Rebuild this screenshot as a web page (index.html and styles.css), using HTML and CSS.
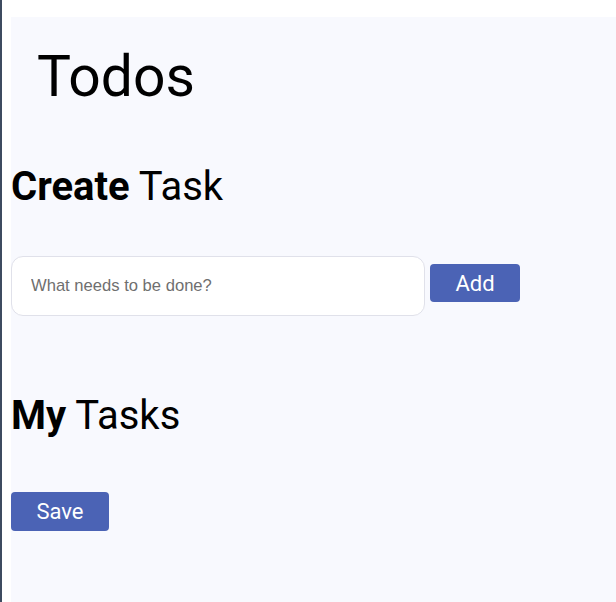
FILE: index.html
```html
<!DOCTYPE html>
<html lang="en">
<head>
<meta charset="utf-8">
<title>Todos</title>
<link rel="stylesheet" href="styles.css">
</head>
<body>
<div class="app">
  <h1 class="title">Todos</h1>
  <section class="create">
    <h2 class="heading"><strong>Create</strong> Task</h2>
    <form class="create-form">
      <input class="task-input" type="text" placeholder="What needs to be done?">
      <button type="button" class="btn btn-add">Add</button>
    </form>
  </section>
  <section class="tasks">
    <h2 class="heading heading-tasks"><strong>My</strong> Tasks</h2>
    <button type="button" class="btn btn-save">Save</button>
  </section>
</div>
</body>
</html>
```
FILE: styles.css
```css
html, body {
  height: 100%;
}
body {
  margin: 0;
  background: #ffffff;
  border-left: 2px solid #3d4b60;
  padding: 17px 0 0 9px;
  box-sizing: border-box;
  font-family: Roboto, "Liberation Sans", sans-serif;
  color: #000;
}
.app {
  background: #f8f9fe;
  min-height: 100%;
  display: flex;
  flex-direction: column;
  align-items: flex-start;
}
.title {
  margin: 26px 0 0 26px;
  font-size: 57px;
  font-weight: 400;
  line-height: 67px;
}
.heading {
  margin: 53px 0 0 0;
  font-size: 40px;
  font-weight: 400;
  line-height: 47px;
}
.heading strong {
  font-weight: 700;
}
.create-form {
  display: flex;
  align-items: center;
  gap: 5px;
  margin-top: 46px;
}
.task-input {
  width: 414px;
  height: 60px;
  box-sizing: border-box;
  border: 1px solid #e0e1ea;
  border-radius: 12px;
  background: #ffffff;
  padding: 0 19px;
  font-family: "Liberation Sans", Arial, sans-serif;
  font-size: 16.6px;
  color: #333;
  outline: none;
}
.task-input::placeholder {
  color: #6f6f6f;
}
.btn {
  background: #4b63b5;
  color: #ffffff;
  border: none;
  border-radius: 4px;
  font-family: Roboto, "Liberation Sans", sans-serif;
  font-size: 22px;
  padding: 0;
  cursor: pointer;
}
.btn-add {
  width: 90px;
  height: 38px;
  margin-top: -6px;
}
.heading-tasks {
  margin-top: 76px;
}
.btn-save {
  width: 98px;
  height: 39px;
  margin-top: 53px;
}
```
